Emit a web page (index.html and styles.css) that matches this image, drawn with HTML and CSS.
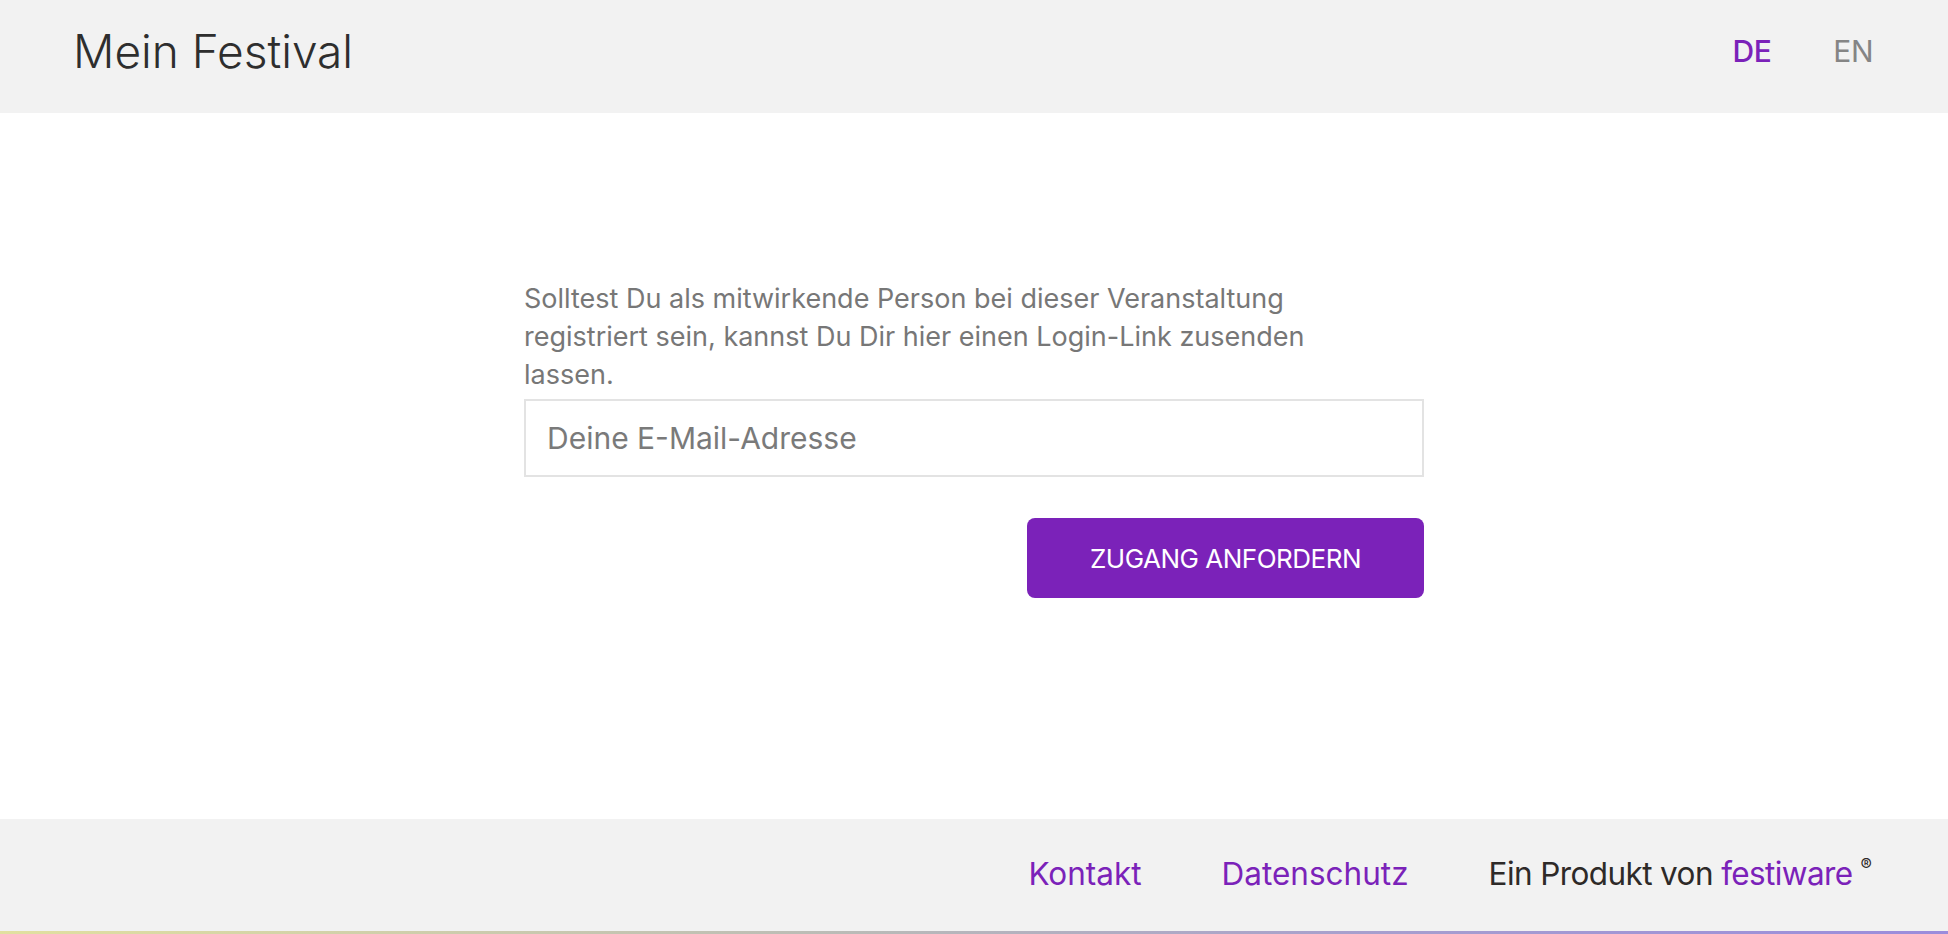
FILE: index.html
```html
<!DOCTYPE html>
<html lang="de">
<head>
<meta charset="utf-8">
<title>Mein Festival</title>
<link rel="stylesheet" href="styles.css">
</head>
<body>
<div class="page">
  <header class="topbar">
    <div class="brand">Mein Festival</div>
    <nav class="langs">
      <a class="lang lang-active" href="#">DE</a>
      <a class="lang" href="#">EN</a>
    </nav>
  </header>
  <main class="main">
    <form class="login">
      <p class="intro">Solltest Du als mitwirkende Person bei dieser Veranstaltung registriert sein, kannst Du Dir hier einen Login-Link zusenden lassen.</p>
      <input class="email" type="email" placeholder="Deine E-Mail-Adresse">
      <div class="actions">
        <button class="submit" type="button">ZUGANG ANFORDERN</button>
      </div>
    </form>
  </main>
  <footer class="footer">
    <a class="flink" href="#">Kontakt</a>
    <a class="flink" href="#">Datenschutz</a>
    <span class="product">Ein Produkt von <span class="fw">festiware</span><sup class="reg">®</sup></span>
  </footer>
</div>
</body>
</html>
```
FILE: styles.css
```css
* { box-sizing: border-box; }
html, body { margin: 0; padding: 0; }
body {
  font-family: Inter, "Noto Sans", sans-serif;
  background: #fff;
  color: #333;
}
.page {
  height: 934px;
  display: flex;
  flex-direction: column;
}
.topbar {
  height: 113px;
  flex: none;
  background: #f2f2f2;
  display: flex;
  align-items: center;
  justify-content: space-between;
  padding: 0 75px 12px 73px;
}
.brand {
  font-size: 46px;
  font-weight: 300;
  color: #2e2e2e;
}
.langs {
  display: flex;
  gap: 62px;
}
.lang {
  font-size: 30px;
  text-decoration: none;
  color: #858585;
  letter-spacing: -0.5px;
}
.lang-active {
  color: #7b22b9;
  font-weight: 500;
}
.main {
  flex: 1;
  padding-top: 168px;
}
.login {
  width: 900px;
  margin: 0 auto;
  display: flex;
  flex-direction: column;
}
.intro {
  margin: -1px 0 5px;
  font-size: 27px;
  line-height: 38px;
  color: #777;
  max-width: 860px;
}
.email {
  height: 78px;
  border: 2px solid #e3e3e3;
  padding: 0 21px;
  font-family: inherit;
  font-size: 30px;
  color: #555;
  outline: none;
}
.email::placeholder { color: #7a7a7a; }
.actions {
  display: flex;
  justify-content: flex-end;
  margin-top: 41px;
}
.submit {
  width: 397px;
  height: 80px;
  border: none;
  border-radius: 8px;
  background: #7b22b9;
  color: #fff;
  font-family: inherit;
  font-size: 26px;
  letter-spacing: -0.5px;
  cursor: pointer;
}
.footer {
  height: 115px;
  flex: none;
  background: #f2f2f2;
  border-bottom: 3px solid transparent;
  border-image: linear-gradient(90deg, #e2e0a0 0%, #b9bab8 45%, #a79fce 70%, #9b8cdc 100%) 1;
  display: flex;
  align-items: center;
  justify-content: flex-end;
  gap: 80px;
  padding: 0 76px 4px 0;
}
.flink {
  font-size: 31.5px;
  color: #7b22b9;
  text-decoration: none;
}
.product {
  font-size: 31.5px;
  color: #2e2a28;
  letter-spacing: -0.6px;
}
.fw { color: #7b22b9; }
.reg {
  font-size: 17px;
  margin-left: 8px;
  vertical-align: 14px;
  line-height: 0;
  letter-spacing: 0;
}
```
